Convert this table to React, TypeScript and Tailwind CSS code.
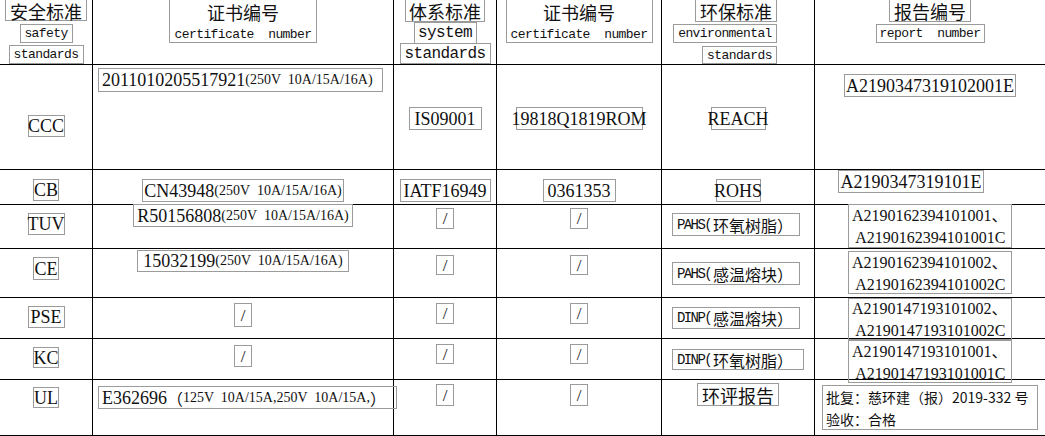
import type { ReactNode } from "react";

const serif = "font-['Liberation_Serif','Noto_Sans_CJK_SC',serif]";
const mono = "font-['Liberation_Mono','Noto_Sans_CJK_SC',monospace]";
const cjk = "font-['Noto_Sans_CJK_SC',sans-serif]";

function Box({ className = "", children }: { className?: string; children: ReactNode }) {
  return (
    <div
      className={`flex shrink-0 items-center justify-center whitespace-pre border border-[#9b9b9b] leading-none ${className}`}
    >
      {children}
    </div>
  );
}

function Cell({ className = "", end = false, children }: { className?: string; end?: boolean; children?: ReactNode }) {
  return (
    <div className={`flex min-w-0 flex-col border-b border-black ${end ? "" : "border-r"} ${className}`}>
      {children}
    </div>
  );
}

function Slash({ className = "" }: { className?: string }) {
  return <Box className={`w-[18px] text-[17px] ${serif} ${className}`}>/</Box>;
}

// 证书号 + 额定值（小字）
function Cert({ code, rating }: { code: string; rating: string }) {
  return (
    <>
      <span className="text-[18px]">{code}</span>
      <span className="text-[14px]">{rating}</span>
    </>
  );
}

function EnvItem({ code, name }: { code: string; name: string }) {
  return (
    <>
      <span className={`text-[14px] tracking-[-1.6px] ${mono}`}>{code}(</span>
      <span className={`ml-[2px] text-[16px] ${cjk}`}>{name}）</span>
    </>
  );
}

function Reports({ a, b }: { a: string; b: string }) {
  return (
    <>
      <span className="leading-[22px]">
        {a}
        <span className={cjk}>、</span>
      </span>
      <span className="leading-[22px]"> {b}</span>
    </>
  );
}

export default function App() {
  return (
    <div className={`h-[436px] w-[1045px] overflow-hidden bg-white text-[#111] ${serif}`}>
      <div className="grid grid-cols-[93px_301px_103px_165px_153px_230px] grid-rows-[65px_105px_35px_44px_49px_41px_41px_56px]">
        {/* 表头：上沿被截掉，不画顶边 */}
        <Cell className="items-center">
          <Box className={`h-[21px] w-[82px] border-t-0 pt-px text-[18px] ${cjk}`}>安全标准</Box>
          <Box className={`mt-[3px] h-[19px] w-[53px] text-[13px] tracking-[-0.6px] ${mono}`}>safety</Box>
          <Box className={`mt-[2px] h-[19px] w-[75px] text-[13px] tracking-[-0.6px] ${mono}`}>standards</Box>
        </Cell>
        <Cell className="items-center">
          <Box className="h-[43px] w-[148px] flex-col gap-[7px] border-t-0 pt-px">
            <span className={`text-[18px] ${cjk}`}>证书编号</span>
            <span className={`text-[13px] tracking-[-0.6px] ${mono}`}>certificate  number</span>
          </Box>
        </Cell>
        <Cell className="items-center">
          <Box className={`h-[22px] w-[80px] border-t-0 pt-px text-[18px] ${cjk}`}>体系标准</Box>
          <Box className={`h-[22px] w-[63px] text-[16px] tracking-[-0.6px] ${mono}`}>system</Box>
          <Box className={`-mt-px h-[21px] w-[91px] text-[16px] tracking-[-0.6px] ${mono}`}>standards</Box>
        </Cell>
        <Cell className="items-center">
          <Box className="h-[43px] w-[147px] flex-col gap-[7px] border-t-0 pt-px">
            <span className={`text-[18px] ${cjk}`}>证书编号</span>
            <span className={`text-[13px] tracking-[-0.6px] ${mono}`}>certificate  number</span>
          </Box>
        </Cell>
        <Cell className="items-end pr-[37px]">
          <Box className={`h-[22px] w-[82px] border-t-0 pt-px text-[18px] ${cjk}`}>环保标准</Box>
          <Box className={`mt-[2px] h-[19px] w-[104px] text-[13px] tracking-[-0.6px] ${mono}`}>environmental</Box>
          <Box className={`mt-[3px] h-[18px] w-[75px] text-[13px] tracking-[-0.6px] ${mono}`}>standards</Box>
        </Cell>
        <Cell end className="items-center">
          <Box className={`h-[22px] w-[82px] border-t-0 pt-px text-[18px] ${cjk}`}>报告编号</Box>
          <Box className={`mt-[2px] h-[19px] w-[109px] text-[13px] tracking-[-0.6px] ${mono}`}>report  number</Box>
        </Cell>

        {/* CCC */}
        <Cell className="items-center pt-[50px]">
          <Box className="h-[22px] w-[37px] text-[18px]">CCC</Box>
        </Cell>
        <Cell className="items-start pl-[5px] pt-[3px]">
          <Box className="h-[24px] w-[285px] justify-start pl-[3px]">
            <Cert code="2011010205517921" rating="(250V  10A/15A/16A)" />
          </Box>
        </Cell>
        <Cell className="items-center pt-[42px]">
          <Box className="h-[23px] w-[73px] text-[18px]">IS09001</Box>
        </Cell>
        <Cell className="items-center pt-[42px]">
          <Box className="h-[23px] w-[127px] text-[18px]">19818Q1819ROM</Box>
        </Cell>
        <Cell className="items-center pt-[42px]">
          <Box className="h-[23px] w-[55px] text-[18px]">REACH</Box>
        </Cell>
        <Cell end className="items-center pt-[9px]">
          <Box className="h-[23px] w-[172px] text-[18px]">A2190347319102001E</Box>
        </Cell>

        {/* CB */}
        <Cell className="items-center pt-[9px]">
          <Box className="h-[22px] w-[26px] text-[18px]">CB</Box>
        </Cell>
        <Cell className="items-center pt-[9px]">
          <Box className="h-[23px] w-[202px]">
            <Cert code="CN43948" rating="(250V  10A/15A/16A)" />
          </Box>
        </Cell>
        <Cell className="items-center pt-[9px]">
          <Box className="h-[23px] w-[91px] text-[18px]">IATF16949</Box>
        </Cell>
        <Cell className="items-center pt-[9px]">
          <Box className="h-[23px] w-[73px] text-[18px]">0361353</Box>
        </Cell>
        <Cell className="items-center pt-[9px]">
          <Box className="h-[23px] w-[45px] text-[18px]">ROHS</Box>
        </Cell>
        <Cell end className="items-start pl-[23px]">
          <Box className="h-[23px] w-[146px] text-[18px]">A2190347319101E</Box>
        </Cell>

        {/* TUV */}
        <Cell className="items-center pt-[8px]">
          <Box className="h-[22px] w-[37px] text-[18px]">TUV</Box>
        </Cell>
        <Cell className="items-center">
          <Box className="-mt-px h-[23px] w-[220px]">
            <Cert code="R50156808" rating="(250V  10A/15A/16A)" />
          </Box>
        </Cell>
        <Cell className="items-center pt-[3px]">
          <Slash className="h-[21px]" />
        </Cell>
        <Cell className="items-center pt-[3px]">
          <Slash className="h-[21px]" />
        </Cell>
        <Cell className="items-start pl-[10px] pt-[8px]">
          <Box className="h-[23px] w-[128px] justify-start pl-[4px]">
            <EnvItem code="PAHS" name="环氧树脂" />
          </Box>
        </Cell>
        <Cell end className="items-center">
          <Box className="-mt-px h-[44px] w-[164px] flex-col items-start pl-[3px] text-[16px]">
            <Reports a="A2190162394101001" b="A2190162394101001C" />
          </Box>
        </Cell>

        {/* CE */}
        <Cell className="items-center pt-[8px]">
          <Box className="h-[23px] w-[26px] text-[18px]">CE</Box>
        </Cell>
        <Cell className="items-center pt-px">
          <Box className="h-[22px] w-[212px]">
            <Cert code="15032199" rating="(250V  10A/15A/16A)" />
          </Box>
        </Cell>
        <Cell className="items-center pt-[6px]">
          <Slash className="h-[20px]" />
        </Cell>
        <Cell className="items-center pt-[6px]">
          <Slash className="h-[20px]" />
        </Cell>
        <Cell className="items-start pl-[10px] pt-[13px]">
          <Box className="h-[23px] w-[128px] justify-start pl-[4px]">
            <EnvItem code="PAHS" name="感温熔块" />
          </Box>
        </Cell>
        <Cell end className="items-center pt-[2px]">
          <Box className="h-[43px] w-[164px] flex-col items-start pl-[3px] text-[16px]">
            <Reports a="A2190162394101002" b="A2190162394101002C" />
          </Box>
        </Cell>

        {/* PSE */}
        <Cell className="items-center pt-[8px]">
          <Box className="h-[22px] w-[37px] text-[18px]">PSE</Box>
        </Cell>
        <Cell className="items-center pt-[5px]">
          <Slash className="h-[24px] w-[17px]" />
        </Cell>
        <Cell className="items-center pt-[5px]">
          <Slash className="h-[21px]" />
        </Cell>
        <Cell className="items-center pt-[5px]">
          <Slash className="h-[21px]" />
        </Cell>
        <Cell className="items-start pl-[10px] pt-[9px]">
          <Box className="h-[22px] w-[128px] justify-start pl-[4px]">
            <EnvItem code="DINP" name="感温熔块" />
          </Box>
        </Cell>
        <Cell end className="items-center">
          <Box className="h-[42px] w-[164px] flex-col items-start pl-[3px] text-[16px]">
            <Reports a="A2190147193101002" b="A2190147193101002C" />
          </Box>
        </Cell>

        {/* KC */}
        <Cell className="items-center pt-[8px]">
          <Box className="h-[21px] w-[26px] text-[18px]">KC</Box>
        </Cell>
        <Cell className="items-center pt-[6px]">
          <Slash className="h-[22px] w-[17px]" />
        </Cell>
        <Cell className="items-center pt-[5px]">
          <Slash className="h-[20px]" />
        </Cell>
        <Cell className="items-center pt-[5px]">
          <Slash className="h-[20px]" />
        </Cell>
        <Cell className="items-start pl-[10px] pt-[10px]">
          <Box className="h-[21px] w-[132px] justify-start pl-[4px]">
            <EnvItem code="DINP" name="环氧树脂" />
          </Box>
        </Cell>
        <Cell end className="items-center pt-px">
          <Box className="h-[43px] w-[164px] flex-col items-start pl-[3px] text-[16px]">
            <Reports a="A2190147193101001" b="A2190147193101001C" />
          </Box>
        </Cell>

        {/* UL */}
        <Cell className="items-center pt-[7px]">
          <Box className="h-[21px] w-[26px] text-[18px]">UL</Box>
        </Cell>
        <Cell className="items-start pl-[5px] pt-[6px]">
          <Box className="h-[23px] w-[299px] justify-start pl-[3px]">
            <span className="text-[18px]">E362696</span>
            <span className={`text-[16px] ${cjk}`}>（</span>
            <span className="text-[14px]">125V  10A/15A,250V  10A/15A,</span>
            <span className={`text-[16px] ${cjk}`}>）</span>
          </Box>
        </Cell>
        <Cell className="items-center pt-[4px]">
          <Slash className="h-[22px]" />
        </Cell>
        <Cell className="items-center pt-[4px]">
          <Slash className="h-[22px]" />
        </Cell>
        <Cell className="items-center pt-[3px]">
          <Box className={`h-[23px] w-[82px] text-[18px] ${cjk}`}>环评报告</Box>
        </Cell>
        <Cell end className="items-center pt-[5px]">
          <Box className={`h-[45px] w-[216px] flex-col items-start pl-[3px] text-[14px] ${cjk}`}>
            <span className="leading-[22px]">批复：慈环建（报）2019-332 号</span>
            <span className="leading-[22px]">验收：合格</span>
          </Box>
        </Cell>
      </div>
    </div>
  );
}
